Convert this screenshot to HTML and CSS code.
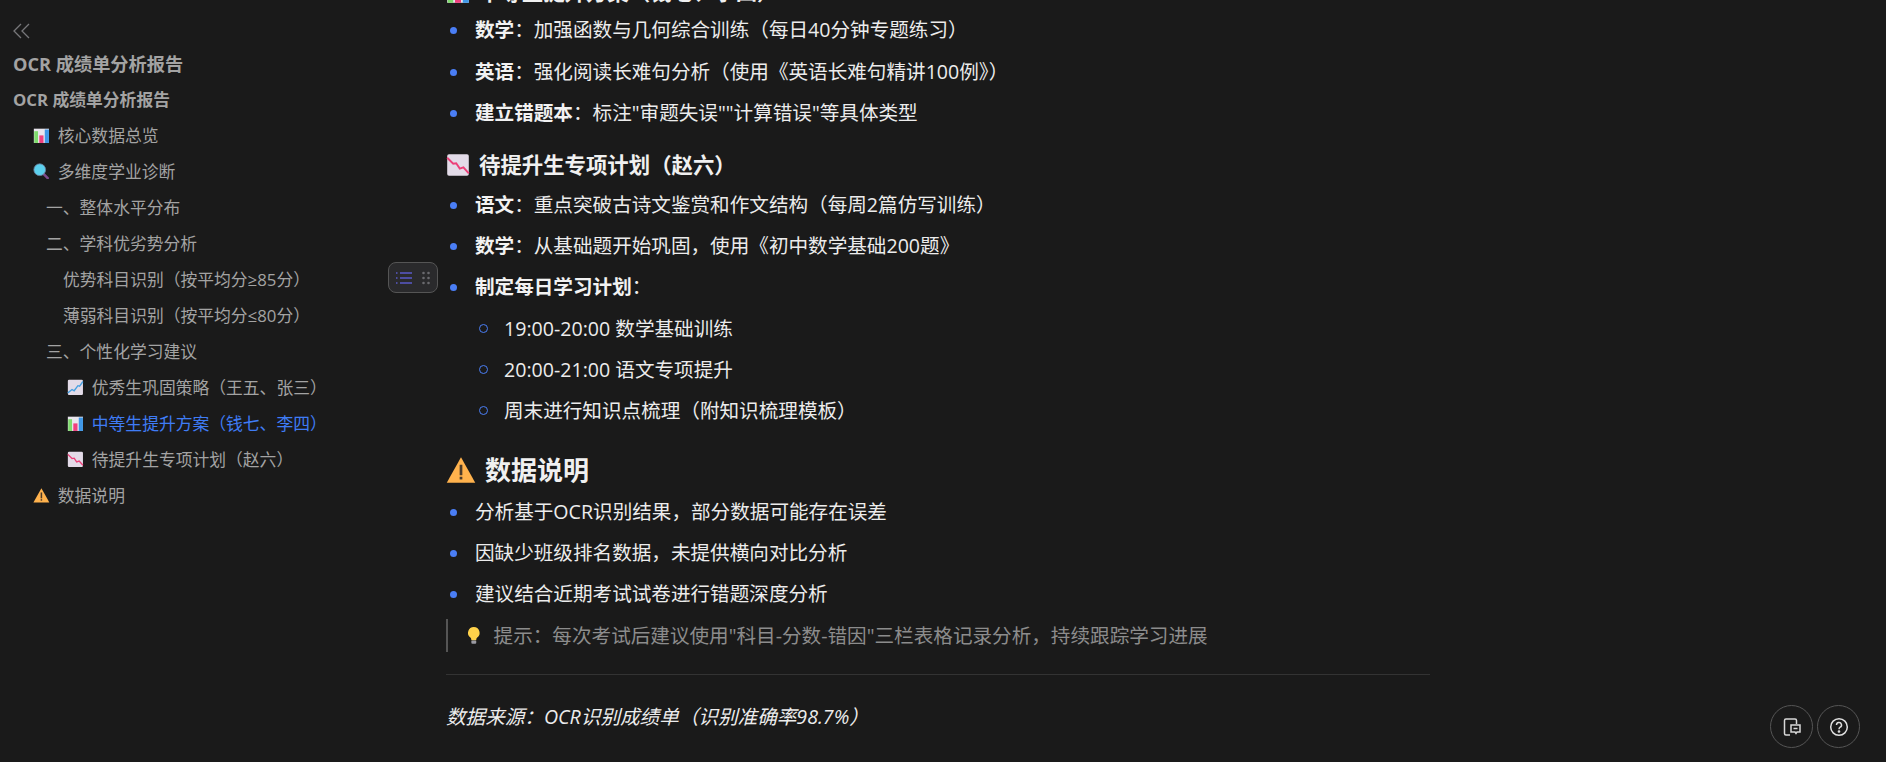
FILE: index.html
```html
<!DOCTYPE html>
<html lang="zh-CN">
<head>
  <meta charset="UTF-8" />
  <title>OCR 成绩单分析报告</title>
  <link rel="stylesheet" href="styles.css">
</head>
<body>

  <svg class="icon-defs" width="0" height="0">
    <symbol id="ic-bars" viewBox="0 0 20 20">
      <rect x="1" y="2" width="18" height="17" fill="#e9e6ee"/>
      <rect x="1.5" y="5" width="4.5" height="14" fill="#7edb6c"/>
      <rect x="7.5" y="10" width="5" height="9" fill="#f0407e"/>
      <rect x="14" y="3" width="5" height="16" fill="#3f98e8"/>
    </symbol>
    <symbol id="ic-up" viewBox="0 0 20 20">
      <rect x="1" y="1" width="18" height="18" rx="1.5" fill="#e3dbe8"/>
      <path d="M1 16.5l5-4 2.5 1.5L13 8l2 .5L19 3" fill="none" stroke="#459fe0" stroke-width="1.6"/>
    </symbol>
    <symbol id="ic-down" viewBox="0 0 20 20">
      <rect x="1" y="1" width="18" height="18" rx="1.5" fill="#e3dbe8"/>
      <path d="M1 4l5 5 2.5-.5 3 4.5 3-1 4.500 5" fill="none" stroke="#ec3f78" stroke-width="1.6"/>
    </symbol>
    <symbol id="ic-search" viewBox="0 0 20 20">
      <path d="M12.500 13l5 5" stroke="#7d4a8c" stroke-width="3" stroke-linecap="round"/>
      <circle cx="8" cy="8" r="7" fill="#5cd0ee" stroke="#6a7f9c" stroke-width="1"/>
    </symbol>
    <symbol id="ic-warn" viewBox="0 0 20 20">
      <path d="M10 1.500L19.500 18.500H.5z" fill="#ffb24d"/>
      <rect x="9.100" y="6.500" width="1.800" height="7" fill="#4a3a2a"/>
      <rect x="9.100" y="14.500" width="1.800" height="1.800" fill="#4a3a2a"/>
    </symbol>
    <symbol id="ic-bulb" viewBox="0 0 20 20">
      <path d="M10 1a6 6 0 0 0-3.500 10.800c.8.700 1 1.700 1 2.700h5c0-1 .2-2 1-2.700A6 6 0 0 0 10 1z" fill="#ffd24a"/>
      <rect x="7.500" y="14.800" width="5" height="3.200" rx="1" fill="#9a9aa2"/>
    </symbol>
  </svg>

  <aside class="sidebar">
    <div class="collapse">
      <svg width="18" height="16" viewBox="0 0 18 16" fill="none" stroke="#77777a" stroke-width="1.300"><path d="M9 1L2 8l7 7M17 1l-7 7 7 7"/></svg>
    </div>
    <div class="toc-row toc-title big">OCR 成绩单分析报告</div>
    <div class="toc-row toc-title">OCR 成绩单分析报告</div>
    <div class="toc-row lv2"><svg class="emoji"><use href="#ic-bars"/></svg>核心数据总览</div>
    <div class="toc-row lv2"><svg class="emoji"><use href="#ic-search"/></svg>多维度学业诊断</div>
    <div class="toc-row lv3">一、整体水平分布</div>
    <div class="toc-row lv3">二、学科优劣势分析</div>
    <div class="toc-row lv4">优势科目识别（按平均分≥85分）</div>
    <div class="toc-row lv4">薄弱科目识别（按平均分≤80分）</div>
    <div class="toc-row lv3">三、个性化学习建议</div>
    <div class="toc-row lv4 icon"><svg class="emoji"><use href="#ic-up"/></svg>优秀生巩固策略（王五、张三）</div>
    <div class="toc-row lv4 icon active"><svg class="emoji"><use href="#ic-bars"/></svg>中等生提升方案（钱七、李四）</div>
    <div class="toc-row lv4 icon"><svg class="emoji"><use href="#ic-down"/></svg>待提升生专项计划（赵六）</div>
    <div class="toc-row lv2"><svg class="emoji"><use href="#ic-warn"/></svg>数据说明</div>
  </aside>

  <div class="toc-tool">
    <svg width="16" height="14" viewBox="0 0 16 14" fill="none" stroke="#5a5ac8" stroke-width="1.500">
      <path d="M4 2h12M4 7h12M4 12h12M0 2h1.500M0 7h1.500M0 12h1.500"/>
    </svg>
    <svg width="8" height="14" viewBox="0 0 8 14" fill="#6a6a6e">
      <circle cx="1.500" cy="2" r="1.300"/><circle cx="6.500" cy="2" r="1.300"/>
      <circle cx="1.500" cy="7" r="1.300"/><circle cx="6.500" cy="7" r="1.300"/>
      <circle cx="1.500" cy="12" r="1.300"/><circle cx="6.500" cy="12" r="1.300"/>
    </svg>
  </div>

  <main class="content">
    <h3 class="top-heading"><svg class="emoji"><use href="#ic-bars"/></svg>中等生提升方案（钱七、李四）</h3>
    <ul class="top-list">
      <li><strong>数学</strong>：加强函数与几何综合训练（每日40分钟专题练习）</li>
      <li><strong>英语</strong>：强化阅读长难句分析（使用《英语长难句精讲100例》）</li>
      <li><strong>建立错题本</strong>：标注"审题失误""计算错误"等具体类型</li>
    </ul>

    <h3><svg class="emoji"><use href="#ic-down"/></svg>待提升生专项计划（赵六）</h3>
    <ul>
      <li><strong>语文</strong>：重点突破古诗文鉴赏和作文结构（每周2篇仿写训练）</li>
      <li><strong>数学</strong>：从基础题开始巩固，使用《初中数学基础200题》</li>
      <li><strong>制定每日学习计划</strong>：
        <ul>
          <li>19:00-20:00 数学基础训练</li>
          <li>20:00-21:00 语文专项提升</li>
          <li>周末进行知识点梳理（附知识梳理模板）</li>
        </ul>
      </li>
    </ul>

    <h2><svg class="emoji"><use href="#ic-warn"/></svg>数据说明</h2>
    <ul>
      <li>分析基于OCR识别结果，部分数据可能存在误差</li>
      <li>因缺少班级排名数据，未提供横向对比分析</li>
      <li>建议结合近期考试试卷进行错题深度分析</li>
    </ul>

    <blockquote><svg class="emoji"><use href="#ic-bulb"/></svg>提示：每次考试后建议使用"科目-分数-错因"三栏表格记录分析，持续跟踪学习进展</blockquote>

    <hr>

    <p class="source">数据来源：OCR识别成绩单（识别准确率98.7%）</p>
  </main>

  <div class="float-btns">
    <button class="round-btn">
      <svg width="20" height="20" viewBox="0 0 20 20" fill="none" stroke="#d8d8d8" stroke-width="1.500">
        <path d="M8 18H4a1.500 1.500 0 0 1-1.500-1.500v-13A1.500 1.500 0 0 1 4 2h9a1.500 1.500 0 0 1 1.500 1.500V7"/>
        <path d="M9 8h9v7h-3l-1 1.500-1-1.500H9z"/><path d="M11.500 11.500h4"/>
      </svg>
    </button>
    <button class="round-btn">
      <svg width="20" height="20" viewBox="0 0 20 20" fill="none" stroke="#e0e0e0" stroke-width="1.500">
        <circle cx="10" cy="10" r="8.300"/>
        <path d="M7.500 8a2.500 2.500 0 1 1 3.700 2.200c-.8.500-1.200 1-1.200 2"/>
        <circle cx="10" cy="14.500" r=".6"/>
      </svg>
    </button>
  </div>

</body>
</html>
```

FILE: styles.css
```css
* {
  box-sizing: border-box;
}

html,
body {
  margin: 0;
  height: 100%;
  overflow: hidden;
}

body {
  display: flex;
  background: #1a1a1a;
  color: #ececec;
  font-family: "Open Sans", "Noto Sans CJK SC", sans-serif;
}

.icon-defs {
  position: absolute;
}

.emoji {
  flex: none;
  width: 1em;
  height: 1em;
}

/* sidebar */
.sidebar {
  flex: none;
  width: 446px;
  padding: 21px 0 0 12px;
  font-size: 16.8px;
  color: #a3a3a3;
}

.collapse {
  height: 24px;
}

.toc-row {
  display: flex;
  align-items: center;
  height: 36px;
  margin-left: 1px;
  white-space: nowrap;
}

.toc-title {
  font-weight: 700;
}

.toc-title.big {
  font-size: 18.2px;
}

.lv2 {
  padding-left: 20px;
}

.lv3 {
  padding-left: 33px;
}

.lv4 {
  padding-left: 50px;
}

.lv4.icon {
  padding-left: 54px;
}

.lv2 .emoji,
.lv4 .emoji {
  margin-right: 8px;
}

.active {
  color: #3f7cf5;
}

.toc-tool {
  position: absolute;
  left: 388px;
  top: 262px;
  display: flex;
  align-items: center;
  justify-content: center;
  gap: 10px;
  width: 50px;
  height: 31px;
  border: 1px solid #555;
  border-radius: 8px;
  background: #2a2a2c;
}

/* article */
.content {
  flex: none;
  width: 984px;
  margin-top: -44px;
  font-size: 19.6px;
  line-height: 30.700px;
}

h2,
h3 {
  display: flex;
  align-items: center;
  margin: 0;
  font-weight: 700;
  color: #f0f0f0;
}

h2 {
  margin: 26px 0 9px;
  font-size: 26px;
  line-height: 36px;
}

h2 .emoji {
  margin-right: 9px;
  width: 30px;
  height: 30px;
}

h3 {
  margin: 21px 0 10px;
  font-size: 21.400px;
  line-height: 30px;
}

h3.top-heading {
  margin-bottom: 8px;
}

h3 .emoji {
  margin-right: 9px;
  width: 24px;
  height: 24px;
}

ul {
  margin: 0;
  padding-left: 29px;
  list-style: none;
}

ul ul {
  margin-top: 12px;
  padding-left: 27px;
}

li {
  margin-bottom: 10px;
}

.top-list li {
  margin-bottom: 11px;
}

li::before {
  content: "";
  display: inline-block;
  width: 7px;
  height: 7px;
  margin-left: -25.500px;
  margin-right: 18.500px;
  border-radius: 50%;
  background: #4a7ef5;
  vertical-align: 3px;
}

li li::before {
  margin-left: -23.500px;
  margin-right: 16.500px;
  border: 1px solid #4a7ef5;
  background: transparent;
}

strong {
  color: #f2f2f2;
}

blockquote {
  display: flex;
  align-items: center;
  height: 33px;
  margin: 0;
  padding-left: 16px;
  border-left: 2px solid #555;
  color: #8c8c8c;
}

blockquote .emoji {
  margin-right: 10px;
}

hr {
  height: 1px;
  margin: 22px 0 27px;
  border: 0;
  background: #333;
}

.source {
  margin: 0;
  font-style: italic;
}

.float-btns {
  position: absolute;
  right: 26px;
  bottom: 14px;
  display: flex;
  gap: 4px;
}

.round-btn {
  display: flex;
  align-items: center;
  justify-content: center;
  width: 43px;
  height: 43px;
  padding: 0;
  border: 1px solid #555;
  border-radius: 50%;
  background: transparent;
}
```
